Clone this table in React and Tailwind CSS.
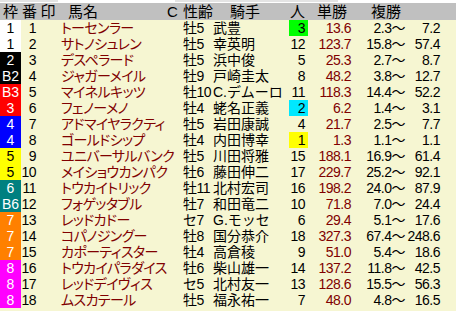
import React from "react";

const rows = [
  ["1", "1", "トーセンラー", "牡5", "武豊", "3", "13.6", "2.3～", "7.2"],
  ["1", "2", "サトノシュレン", "牡5", "幸英明", "12", "123.7", "15.8～", "57.4"],
  ["2", "3", "デスペラード", "牡5", "浜中俊", "5", "25.3", "2.7～", "8.7"],
  ["B2", "4", "ジャガーメイル", "牡9", "戸崎圭太", "8", "48.2", "3.8～", "12.7"],
  ["B3", "5", "マイネルキッツ", "牡10", "C.デムーロ", "11", "118.3", "14.4～", "52.2"],
  ["3", "6", "フェノーメノ", "牡4", "蛯名正義", "2", "6.2", "1.4～", "3.1"],
  ["4", "7", "アドマイヤラクティ", "牡5", "岩田康誠", "4", "21.7", "2.5～", "7.7"],
  ["4", "8", "ゴールドシップ", "牡4", "内田博幸", "1", "1.3", "1.1～", "1.1"],
  ["5", "9", "ユニバーサルバンク", "牡5", "川田将雅", "15", "188.1", "16.9～", "61.4"],
  ["5", "10", "メイショウカンパク", "牡6", "藤田伸二", "17", "229.7", "25.2～", "92.1"],
  ["6", "11", "トウカイトリック", "牡11", "北村宏司", "16", "198.2", "24.0～", "87.9"],
  ["B6", "12", "フォゲッタブル", "牡7", "和田竜二", "10", "71.8", "7.0～", "24.4"],
  ["7", "13", "レッドカドー", "セ7", "G.モッセ", "6", "29.4", "5.1～", "17.6"],
  ["7", "14", "コパノジングー", "牡8", "国分恭介", "18", "327.3", "67.4～", "248.6"],
  ["7", "15", "カポーティスター", "牡4", "高倉稜", "9", "51.0", "5.4～", "18.6"],
  ["8", "16", "トウカイパラダイス", "牡6", "柴山雄一", "14", "137.2", "11.8～", "42.5"],
  ["8", "17", "レッドデイヴィス", "セ5", "北村友一", "13", "128.6", "15.5～", "56.3"],
  ["8", "18", "ムスカテール", "牡5", "福永祐一", "7", "48.0", "4.8～", "16.5"],
];

function frameClass(w) {
  const n = w.replace("B", "");
  switch (n) {
    case "1":
      return "bg-white text-black";
    case "2":
      return "bg-black text-white";
    case "3":
      return "bg-[#ff0000] text-white";
    case "4":
      return "bg-[#0000ff] text-white";
    case "5":
      return "bg-[#ffff00] text-black";
    case "6":
      return "bg-[#008080] text-white";
    case "7":
      return "bg-[#ff8000] text-white";
    default:
      return "bg-[#ff00ff] text-white";
  }
}

function popClass(p) {
  if (p === "1") return "bg-[#ffff00]";
  if (p === "2") return "bg-[#00e8ff]";
  if (p === "3") return "bg-[#00ff00]";
  return "";
}

export default function App() {
  return (
    <div
      className="w-[456px] h-[314px] bg-white overflow-hidden"
      style={{ fontFamily: '"Liberation Sans", "Noto Sans CJK JP", sans-serif' }}
    >
      <div className="h-[3px] flex">
        <div className="w-[58px] h-[2px] bg-[#e4e4e4]" />
        <div className="w-[117px]" />
        <div className="w-[163px] h-[2px] bg-[#e4e4e4]" />
      </div>
      <div className="h-[17px] bg-[#c0c0c0] flex text-[14px] leading-[17px] text-black">
        <div className="w-[21px] text-center text-[15px]">枠</div>
        <div className="w-[17px] text-center text-[15px]">番</div>
        <div className="w-[20px] text-center text-[15px]">印</div>
        <div className="w-[107px] pl-[10px] text-[15px]">馬名</div>
        <div className="w-[18px] pl-[2px] text-[15px]">C</div>
        <div className="w-[30px] text-[15px]">性齢</div>
        <div className="w-[76px] pl-[17px] text-[15px]">騎手</div>
        <div className="w-[19px] pl-[1px] text-[15px]">人</div>
        <div className="w-[63px] pl-[9px] text-[15px]">単勝</div>
        <div className="flex-1 text-[15px]">複勝</div>
      </div>
      <div className="bg-[#f6f6d2] pb-[3px]">
        {rows.map((r, i) => (
          <div key={i} className="h-[16px] flex text-[14px] leading-[16px] text-black">
            <div className={`w-[21px] text-center ${frameClass(r[0])}`}>{r[0]}</div>
            <div className="w-[17px] text-right pr-[2px] tracking-[-0.5px]">{r[1]}</div>
            <div className="w-[20px]" />
            <div className="w-[107px] pl-[3px] text-[#800000] whitespace-nowrap [font-feature-settings:'palt'] tracking-[-0.6px]">
              {r[2]}
            </div>
            <div className="w-[18px]" />
            <div className="w-[30px] whitespace-nowrap tracking-[-0.5px]">{r[3]}</div>
            <div className="w-[76px] whitespace-nowrap">{r[4]}</div>
            <div className={`w-[19px] text-right pr-[3px] tracking-[-0.5px] ${popClass(r[5])}`}>{r[5]}</div>
            <div className="w-[44px] text-right pr-[1px] text-[#800000] tracking-[-0.5px]">{r[6]}</div>
            <div className="w-[54px] text-right pr-[1px] whitespace-nowrap tracking-[-0.5px]">{r[7]}</div>
            <div className="w-[36px] text-right pr-[2px] tracking-[-0.5px]">{r[8]}</div>
            <div className="flex-1" />
          </div>
        ))}
      </div>
    </div>
  );
}
